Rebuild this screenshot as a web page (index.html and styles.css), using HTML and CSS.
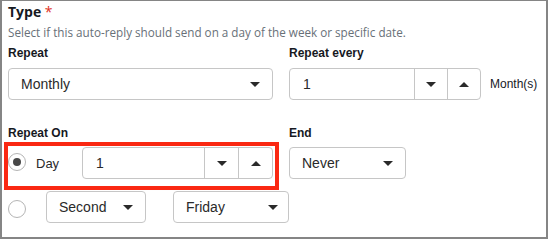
FILE: index.html
```html
<!DOCTYPE html>
<html>
<head>
<meta charset="utf-8">
<link rel="stylesheet" href="styles.css">
</head>
<body>
<div class="frame">
  <div class="title">Type <span class="req">*</span></div>
  <div class="desc">Select if this auto-reply should send on a day of the week or specific date.</div>

  <div class="row row1">
    <div class="col">
      <div class="label">Repeat</div>
      <div class="select wide"><span class="val">Monthly</span><span class="caret"></span></div>
    </div>
    <div class="col">
      <div class="label">Repeat every</div>
      <div class="inline">
        <div class="num num-every">
          <span class="num-val">1</span>
          <span class="num-btn"><span class="caret"></span></span>
          <span class="num-btn"><span class="caret up"></span></span>
        </div>
        <span class="unit">Month(s)</span>
      </div>
    </div>
  </div>

  <div class="row row2">
    <div class="col">
      <div class="label">Repeat On</div>
      <div class="highlight">
        <span class="radio checked"></span>
        <span class="radio-label">Day</span>
        <div class="num num-day">
          <span class="num-val">1</span>
          <span class="num-btn"><span class="caret"></span></span>
          <span class="num-btn"><span class="caret up"></span></span>
        </div>
      </div>
    </div>
    <div class="col">
      <div class="label">End</div>
      <div class="select end"><span class="val">Never</span><span class="caret"></span></div>
    </div>
  </div>

  <div class="row3">
    <span class="radio r3"></span>
    <div class="select second"><span class="val">Second</span><span class="caret"></span></div>
    <div class="select friday"><span class="val">Friday</span><span class="caret"></span></div>
  </div>
</div>
</body>
</html>
```

FILE: styles.css
```css
html, body {
  margin: 0;
  padding: 0;
  background: #fff;
}
.frame {
  width: 548px;
  height: 239px;
  box-sizing: border-box;
  border: 2px solid #858585;
  border-top-width: 1px;
  padding: 2px 0 0 6px;
  font-family: "Liberation Sans", Arial, sans-serif;
  color: #16191f;
  overflow: hidden;
}
.title {
  font-family: "Open Sans", "Noto Sans", sans-serif;
  font-weight: 700;
  font-size: 14px;
  line-height: 18px;
}
.req {
  color: #e0301e;
  font-weight: 400;
}
.desc {
  font-family: "Open Sans", "Noto Sans", sans-serif;
  font-size: 11.7px;
  line-height: 18px;
  color: #687078;
  margin-top: 2px;
}
.row {
  display: grid;
  grid-template-columns: 265px 1fr;
  column-gap: 16px;
}
.row1 { margin-top: 5px; }
.row2 { margin-top: 26px; }
.label {
  font-weight: 700;
  font-size: 12px;
  line-height: 14px;
}
.row1 .label { margin-bottom: 8px; }
.select, .num {
  box-sizing: border-box;
  height: 32px;
  border: 1px solid #c6c6c6;
  border-radius: 4px;
  display: flex;
  align-items: center;
  font-size: 14px;
  background: #fff;
}
.select {
  justify-content: space-between;
  padding: 0 12px 0 12px;
}
.val { color: #2a2a2a; }
.caret {
  width: 0;
  height: 0;
  border-left: 5px solid transparent;
  border-right: 5px solid transparent;
  border-top: 5px solid #2a2a2a;
}
.caret.up {
  border-top: 0;
  border-bottom: 5px solid #2a2a2a;
}
.inline {
  display: flex;
  align-items: center;
}
.num-every { width: 192px; }
.num-val {
  flex: 1;
  padding-left: 13px;
  color: #2a2a2a;
}
.num-btn {
  width: 32px;
  height: 100%;
  border-left: 1px solid #c6c6c6;
  display: flex;
  align-items: center;
  justify-content: center;
}
.num-day .num-btn { width: 33px; }
.unit {
  font-size: 12px;
  margin-left: 9px;
  color: #16191f;
}
.highlight {
  margin: 2px -6px 0 -4px;
  border: 4px solid #fa2812;
  padding: 1px 2px 7px 0;
  display: flex;
  align-items: center;
}
.radio {
  box-sizing: border-box;
  width: 18px;
  height: 18px;
  border: 1px solid #b5b5b5;
  border-radius: 50%;
  background: #fff;
  display: flex;
  align-items: center;
  justify-content: center;
  flex: none;
}
.radio.checked {
  margin-bottom: 2px;
}
.radio.checked::after {
  content: "";
  width: 8px;
  height: 8px;
  border-radius: 50%;
  background: #484848;
}
.radio-label {
  font-size: 13px;
  margin-left: 10px;
  width: 46px;
  color: #2a2a2a;
}
.num-day { flex: 1; }
.end {
  width: 117px;
  margin-top: 7px;
}
.wide { width: 265px; }
.row3 {
  display: flex;
  align-items: center;
  margin-top: 1px;
}
.r3 { margin-top: 4px; }
.second {
  width: 100px;
  margin-left: 20px;
}
.friday {
  width: 116px;
  margin-left: 27px;
  padding-right: 10px;
}
```
